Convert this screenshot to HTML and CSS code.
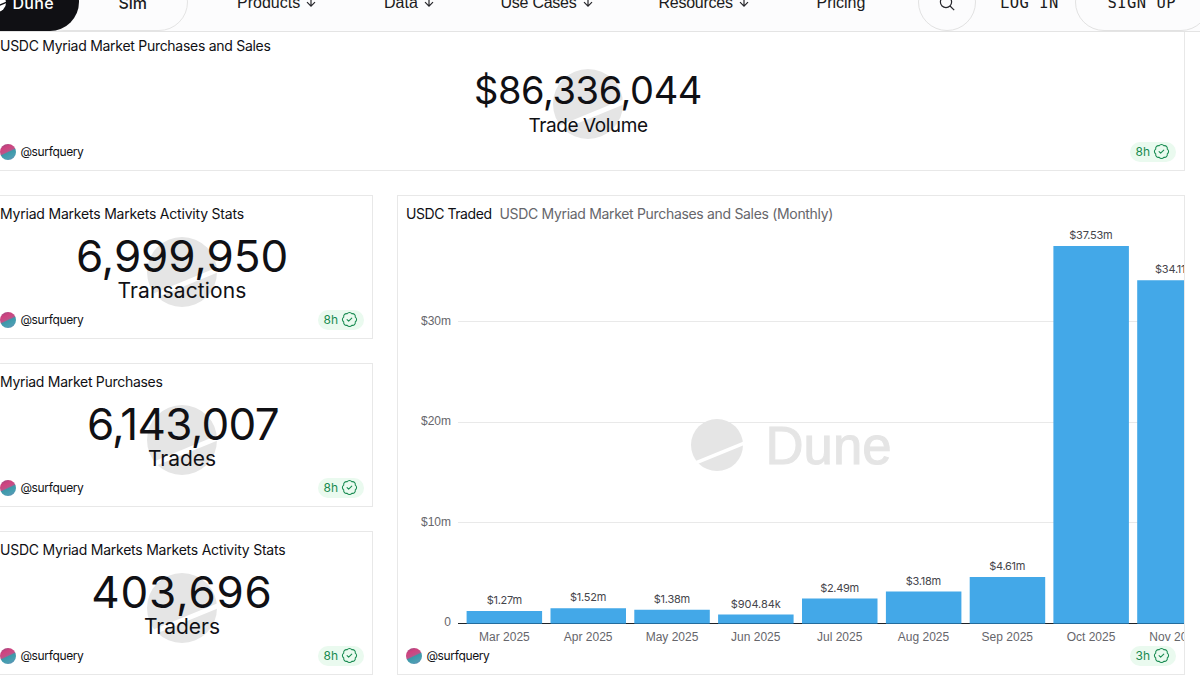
FILE: index.html
```
<!DOCTYPE html>
<html lang="en">
<head>
<meta charset="utf-8">
<title>Myriad Markets | Dune</title>
<link rel="stylesheet" href="styles.css">
</head>
<body>
<svg width="0" height="0" class="defs">
  <symbol id="dune" viewBox="-26 -26 52 52"><circle r="26" fill="#e5e5e5"/><path d="M-20 17.4 27-1.8" stroke="#fff" stroke-width="3.6"/></symbol>
  <symbol id="check" viewBox="0 0 24 24"><g fill="none" stroke="#178a50" stroke-width="1.5" stroke-linecap="round" stroke-linejoin="round"><path d="M3.85 8.62a4 4 0 0 1 4.78-4.77 4 4 0 0 1 6.74 0 4 4 0 0 1 4.78 4.78 4 4 0 0 1 0 6.74 4 4 0 0 1-4.77 4.78 4 4 0 0 1-6.75 0 4 4 0 0 1-4.78-4.77 4 4 0 0 1 0-6.76Z"/><path d="m8.6 12.2 2.2 2.2 4.4-4.4"/></g></symbol>
  <symbol id="arrow" viewBox="0 0 10 12"><path d="M5 0v10M1 6.2l4 4 4-4" fill="none" stroke="#26262b" stroke-width="1.2"/></symbol>
</svg>
<header class="topbar">
  <a class="pill pill-dune"><svg class="mark" width="18" height="18" viewBox="-26 -26 52 52"><circle r="26" fill="#fff"/><path d="M-20 17.4 27-1.8" stroke="#101014" stroke-width="4"/></svg>Dune</a>
  <a class="pill pill-sim">Sim</a>
  <nav class="nav">
    <a>Products<svg width="10" height="12"><use href="#arrow"/></svg></a>
    <a class="data">Data<svg width="10" height="12"><use href="#arrow"/></svg></a>
    <a class="cases">Use Cases<svg width="10" height="12"><use href="#arrow"/></svg></a>
    <a class="resources">Resources<svg width="10" height="12"><use href="#arrow"/></svg></a>
    <a class="pricing">Pricing</a>
  </nav>
  <a class="search"><svg width="16" height="16" viewBox="0 0 16 16" fill="none" stroke="#26262b" stroke-width="1.2"><circle cx="7" cy="7" r="5.6"/><path d="m11 11 4.2 4.2"/></svg></a>
  <a class="login">LOG IN</a>
  <a class="signup">SIGN UP</a>
</header>
<main class="board">
  <section class="card wide">
    <h2 class="head t1">USDC Myriad Market Purchases and Sales</h2>
    <div class="body"><svg class="wm" width="70" height="70"><use href="#dune"/></svg><div class="value v1">$86,336,044</div><div class="label l1">Trade Volume</div></div>
    <footer class="foot"><span class="avatar"></span><span class="user">@surfquery</span><span class="badge">8h<svg width="17" height="17"><use href="#check"/></svg></span></footer>
  </section>
  <section class="card">
    <h2 class="head t2">Myriad Markets Markets Activity Stats</h2>
    <div class="body"><svg class="wm" width="70" height="70"><use href="#dune"/></svg><div class="value v2">6,999,950</div><div class="label l2">Transactions</div></div>
    <footer class="foot"><span class="avatar"></span><span class="user">@surfquery</span><span class="badge">8h<svg width="17" height="17"><use href="#check"/></svg></span></footer>
  </section>
  <section class="card chart">
    <h2 class="head"><span class="ct">USDC Traded</span><span class="cs">USDC Myriad Market Purchases and Sales (Monthly)</span></h2>
    <svg class="plot" width="786" height="420" viewBox="398 224 786 420">
      <g stroke="#e9e9e9"><path d="M458 321.5h726M458 422.5h726M458 522.5h726"/></g>
      <svg x="691" y="419" width="52" height="52"><use href="#dune"/></svg>
      <text class="wordmark" x="765.5" y="464" textLength="126" lengthAdjust="spacingAndGlyphs">Dune</text>
      <g class="bars">
        <path d="M466.6 611h75.5v12h-75.5zM550.5 608.3h75.5v15h-75.5zM634.3 609.8h75.5v14h-75.5zM718.1 614.5h75.5v9h-75.5zM802 598.5h75.5v25h-75.5zM885.9 591.5h75.5v32h-75.5zM969.7 577h75.5v46h-75.5zM1053.4 246h75.5v377h-75.5zM1137.2 280.3h75.5v343h-75.5z"/>
      </g>
      <path d="M458 623.5h726" stroke="#1f2226" stroke-width="1.2"/>
      <path d="M466.6 623.5h75.5m8.4 0h75.5m8.3 0h75.5m8.3 0h75.5m8.4 0h75.5m8.4 0h75.5m8.3 0h75.5m8.2 0h75.5m8.3 0h75.5" stroke="#246d9e" stroke-width="1.2"/>
      <g class="vals">
        <text x="504.4" y="603.5" textLength="35.5">$1.27m</text>
        <text x="588.2" y="601" textLength="36.5">$1.52m</text>
        <text x="672" y="602.5" textLength="36.5">$1.38m</text>
        <text x="755.8" y="607.5" textLength="50">$904.84k</text>
        <text x="839.7" y="591.5" textLength="39">$2.49m</text>
        <text x="923.5" y="584.5" textLength="35.5">$3.18m</text>
        <text x="1007.3" y="570" textLength="36">$4.61m</text>
        <text x="1091" y="239" textLength="43.5">$37.53m</text>
        <text x="1175" y="273.3" textLength="40">$34.11m</text>
      </g>
      <g class="months">
        <text x="504.4" y="641">Mar 2025</text><text x="588.2" y="641">Apr 2025</text><text x="672" y="641">May 2025</text><text x="755.8" y="641">Jun 2025</text><text x="839.7" y="641">Jul 2025</text><text x="923.5" y="641">Aug 2025</text><text x="1007.3" y="641">Sep 2025</text><text x="1091" y="641">Oct 2025</text><text x="1175" y="641">Nov 2025</text>
      </g>
      <g class="ticks"><text x="451" y="324.8">$30m</text><text x="451" y="425.2">$20m</text><text x="451" y="525.6">$10m</text><text x="451" y="626.2">0</text></g>
    </svg>
    <footer class="foot"><span class="avatar"></span><span class="user">@surfquery</span><span class="badge">3h<svg width="17" height="17"><use href="#check"/></svg></span></footer>
  </section>
  <section class="card">
    <h2 class="head t3">Myriad Market Purchases</h2>
    <div class="body"><svg class="wm" width="70" height="70"><use href="#dune"/></svg><div class="value v3">6,143,007</div><div class="label">Trades</div></div>
    <footer class="foot"><span class="avatar"></span><span class="user">@surfquery</span><span class="badge">8h<svg width="17" height="17"><use href="#check"/></svg></span></footer>
  </section>
  <section class="card">
    <h2 class="head t4">USDC Myriad Markets Markets Activity Stats</h2>
    <div class="body"><svg class="wm" width="70" height="70"><use href="#dune"/></svg><div class="value v4">403,696</div><div class="label">Traders</div></div>
    <footer class="foot"><span class="avatar"></span><span class="user">@surfquery</span><span class="badge">8h<svg width="17" height="17"><use href="#check"/></svg></span></footer>
  </section>
</main>
</body>
</html>
```
FILE: styles.css
```
* { box-sizing: border-box; }
html { overflow: hidden; }
body { margin: 0; width: 1200px; height: 675px; overflow: hidden; display: flex; flex-direction: column; background: #fff; color: #101014; font-family: Inter, sans-serif; }
svg { display: block; flex: none; }
.defs { position: absolute; }

.topbar { position: relative; z-index: 2; flex: none; display: flex; align-items: stretch; height: 58.5px; margin: -27px 0 -4.5px; background: #fcfcfd; border-bottom: 1px solid #e4e4e4; font: 16px "Liberation Sans", sans-serif; }
.topbar a { flex: none; display: flex; align-items: center; height: 58px; padding-top: 2px; color: #1b1b20; }
.topbar .pill { font: 500 16px Inter, sans-serif; }
.pill-dune { width: 123px; margin-left: -44px; padding-left: 32px; gap: 6.5px; border-radius: 29px; background: #101014; letter-spacing: .3px; position: relative; z-index: 2; }
.topbar .pill-dune { color: #fff; }
.topbar .pill-sim { width: 153px; margin-left: -44px; padding-left: 82.5px; border: 1px solid #e4e4e4; border-radius: 29px; }
.nav { width: 730px; flex: none; display: flex; gap: 68px; padding-left: 49px; }
.nav a { gap: 6px; width: 79px; white-space: nowrap; }
.nav svg { margin-top: -2px; }
.nav .data { width: 48.5px; }
.nav .cases { width: 90px; letter-spacing: -.25px; }
.nav .resources { width: 90px; letter-spacing: -.25px; }
.nav .pricing { width: 50px; }
.topbar .search { width: 58px; justify-content: center; border: 1px solid #e2e2e2; border-radius: 50%; }
.topbar .login { width: 99px; padding-left: 24px; font: 15.5px "DejaVu Sans Mono", monospace; letter-spacing: .45px; }
.topbar .signup { width: 135px; padding-left: 31.5px; border: 1px solid #e2e2e2; border-radius: 29px; font: 15.5px "DejaVu Sans Mono", monospace; letter-spacing: .45px; }

.board { flex: none; width: 1194px; margin-left: -9px; display: grid; grid-template-columns: 382px 788px; grid-template-rows: repeat(4, 144px); gap: 24px; }
.card { display: flex; flex-direction: column; overflow: hidden; border: 1px solid #e8e8e8; background: #fff; }
.wide { grid-column: 1 / 3; }
.chart { grid-column: 2; grid-row: 2 / 5; }
.head { flex: none; display: flex; gap: 8px; margin: 8px 8px 0; font-size: 14px; line-height: 20px; font-weight: 400; white-space: nowrap; }
.t1 { letter-spacing: -.28px; }
.t2 { letter-spacing: -.2px; }
.t3 { letter-spacing: -.29px; }
.t4 { letter-spacing: -.23px; }
.ct { letter-spacing: -.44px; }
.cs { letter-spacing: -.32px; color: #66666b; }

.body { position: relative; flex: none; height: 86px; padding-top: 10px; text-align: center; }
.wide .body { padding-top: 12px; }
.wm { position: absolute; left: 50%; top: 13px; margin-left: -35px; }
.value { position: relative; font-size: 44px; line-height: 44px; }
.label { position: relative; font-size: 21px; line-height: 25px; }
.wide .value { line-height: 45px; }
.v1 { font-size: 38px; letter-spacing: -.4px; }
.v2 { letter-spacing: -.1px; }
.v3 { letter-spacing: -.7px; padding-left: 2px; }
.v4 { letter-spacing: .8px; }
.l1 { font-size: 19px; letter-spacing: -.42px; }
.l2 { letter-spacing: .15px; }

.foot { flex: none; display: flex; align-items: center; height: 20px; margin: 0 8px; font-size: 12px; line-height: 16px; }
.chart .foot { margin-top: 2px; }
.avatar { width: 16px; height: 16px; border-radius: 50%; background: linear-gradient(155deg, #8f4a82 0%, #d1437f 28%, #bd5389 47%, #3d98a9 53%, #4a9eb2 75%, #6a86b4 100%); }
.user { margin-left: 4.4px; letter-spacing: -.36px; }
.badge { width: 46px; height: 20px; margin-left: auto; padding: 0 0 1px 5.5px; display: flex; align-items: center; gap: 3px; border-radius: 10px; background: #eafaef; color: #178a50; }

.plot text { font-family: Inter, sans-serif; }
.plot .wordmark { font: 500 53px "Liberation Sans", sans-serif; fill: #e5e5e5; stroke: #e5e5e5; stroke-width: 1; }
.bars { fill: #43a8e8; }
.vals { font-size: 11px; fill: #45454b; text-anchor: middle; }
.plot .months text { font: 12px "Liberation Sans", sans-serif; fill: #66666b; text-anchor: middle; }
.plot .ticks text { font: 12px "Liberation Sans", sans-serif; fill: #66666b; text-anchor: end; }
```
